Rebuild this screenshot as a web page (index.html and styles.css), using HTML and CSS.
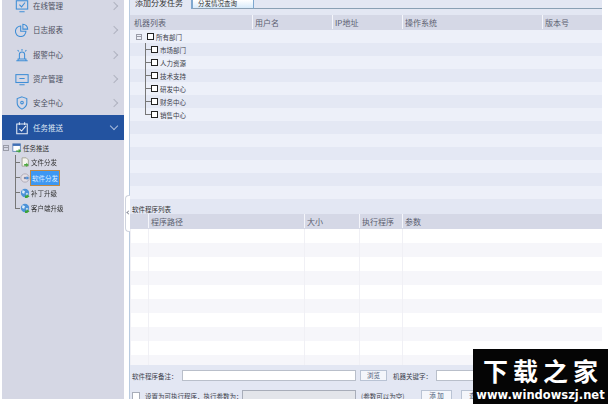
FILE: index.html
```html
<!DOCTYPE html>
<html>
<head>
    <title>任务推送</title>
    <link rel="stylesheet" href="styles.css">
</head>
<body>
    <div class="app">
        <div class="sidebar">
            <div class="menu-item">
                <svg class="menu-icon" viewBox="0 0 16 16"><rect x="1.500" y="2" width="13" height="9.500"/><path d="M5 14.500h6M5 6.500l2.500 2.500 4-5"/></svg>
                <span class="menu-text">在线管理</span><span class="chev"></span>
            </div>
            <div class="menu-item">
                <svg class="menu-icon" viewBox="0 0 16 16"><path d="M6.500 3.500a6 6 0 1 0 6 6h-6zM9 1.500a5.500 5.500 0 0 1 5.500 5.500H9z"/></svg>
                <span class="menu-text">日志报表</span><span class="chev"></span>
            </div>
            <div class="menu-item">
                <svg class="menu-icon" viewBox="0 0 16 16"><path d="M1.500 14.500h13M3.500 14.500v-2h9v2M5 12.500V7.500a3 3 0 0 1 6 0v5M8 1v2M3 2.500l1.500 1.500M13 2.500L11.500 4"/></svg>
                <span class="menu-text">报警中心</span><span class="chev"></span>
            </div>
            <div class="menu-item">
                <svg class="menu-icon" viewBox="0 0 16 16"><rect x="1" y="3" width="14" height="9"/><path d="M5 14.500h6M5 7.500h6"/></svg>
                <span class="menu-text">资产管理</span><span class="chev"></span>
            </div>
            <div class="menu-item">
                <svg class="menu-icon" viewBox="0 0 16 16"><path d="M8 1l5.500 2v5c0 3.500-2.500 5.500-5.500 7-3-1.500-5.500-3.500-5.500-7V3z"/><circle cx="8" cy="7.500" r="1.500"/></svg>
                <span class="menu-text">安全中心</span><span class="chev"></span>
            </div>
            <div class="menu-item active">
                <svg class="menu-icon" viewBox="0 0 16 16"><path d="M2 3.500h12v11H2zM5 1.500v3M11 1.500v3M5 9l2.500 2.500 5-6"/></svg>
                <span class="menu-text">任务推送</span><span class="chev down"></span>
            </div>

            <div class="side-tree">
                <div class="side-root">
                    <span class="expander"></span>
                    <svg class="tree-icon" viewBox="0 0 12 12"><rect x="1" y="1" width="9" height="9" fill="#fff" stroke="#5a7fb5"/><rect x="1" y="1" width="9" height="2.500" fill="#3f6fb5"/><path d="M5 9h3V7l3 2.500L8 12v-1.500H5z" fill="#3ea33a"/></svg>
                    <span>任务推送</span>
                </div>
                <div class="side-node">
                    <svg class="tree-icon" viewBox="0 0 12 12"><path d="M2.500 1h5l2.500 2.500V11h-7.500z" fill="#f5f5ee" stroke="#9a9a8c"/><path d="M5 8.500h2.500V7l3 2.500-3 2.500v-1.500H5z" fill="#4aa83f"/></svg>
                    <span>文件分发</span>
                </div>
                <div class="side-node">
                    <svg class="tree-icon" viewBox="0 0 12 12"><circle cx="6" cy="6" r="5" fill="#e2dfe6" stroke="#a9a5b0"/><circle cx="6" cy="6" r="1.500" fill="#c47f6a"/><path d="M5 5h3V3.500l3 2.500-3 2.500V7H5z" fill="#4d8fd6"/></svg>
                    <span class="selected">软件分发</span>
                </div>
                <div class="side-node">
                    <svg class="tree-icon" viewBox="0 0 12 12"><circle cx="6" cy="6" r="5" fill="#4d93d8"/><path d="M3 2.500l3 1.500-1 3-2.500-1zM7 6l3 .5-1.500 3z" fill="#dfeef8"/><path d="M6 9h2.500V7.500l3 2.500-3 2H6z" fill="#3ea33a"/></svg>
                    <span>补丁升级</span>
                </div>
                <div class="side-node last-node">
                    <svg class="tree-icon" viewBox="0 0 12 12"><circle cx="6" cy="6" r="5" fill="#4d93d8"/><path d="M3 2.500l3 1.500-1 3-2.500-1zM7 6l3 .5-1.500 3z" fill="#dfeef8"/><path d="M6 9h2.500V7.500l3 2.500-3 2H6z" fill="#3ea33a"/></svg>
                    <span>客户端升级</span>
                </div>
            </div>
        </div>

        <div class="splitter"><span class="splitter-arrow"></span></div>

        <div class="panel">
            <div class="tabs">
                <div class="tab on">添加分发任务</div>
                <div class="tab">分发情况查询</div>
            </div>

            <div class="grid-head top-cols">
                <div>机器列表</div>
                <div>用户名</div>
                <div>IP地址</div>
                <div>操作系统</div>
                <div>版本号</div>
            </div>
            <div class="top-rows">
                <div class="row"><span class="expander"></span><span class="check"></span><span>所有部门</span></div>
                <div class="row dept"><span class="check"></span><span>市场部门</span></div>
                <div class="row dept"><span class="check"></span><span>人力资源</span></div>
                <div class="row dept"><span class="check"></span><span>技术支持</span></div>
                <div class="row dept"><span class="check"></span><span>研发中心</span></div>
                <div class="row dept"><span class="check"></span><span>财务中心</span></div>
                <div class="row dept last-dept"><span class="check"></span><span>销售中心</span></div>
                <div class="row"></div>
                <div class="row"></div>
                <div class="row"></div>
                <div class="row"></div>
                <div class="row"></div>
                <div class="row"></div>
            </div>

            <div class="caption">软件程序列表</div>
            <div class="grid-head low-cols">
                <div></div>
                <div>程序路径</div>
                <div>大小</div>
                <div>执行程序</div>
                <div>参数</div>
            </div>
            <div class="low-rows">
                <div class="low-row low-cols"><i></i><i></i><i></i><i></i><i></i></div>
                <div class="low-row low-cols"><i></i><i></i><i></i><i></i><i></i></div>
                <div class="low-row low-cols"><i></i><i></i><i></i><i></i><i></i></div>
                <div class="low-row low-cols"><i></i><i></i><i></i><i></i><i></i></div>
                <div class="low-row low-cols"><i></i><i></i><i></i><i></i><i></i></div>
                <div class="low-row low-cols"><i></i><i></i><i></i><i></i><i></i></div>
                <div class="low-row low-cols"><i></i><i></i><i></i><i></i><i></i></div>
                <div class="low-row low-cols"><i></i><i></i><i></i><i></i><i></i></div>
                <div class="low-row low-cols"><i></i><i></i><i></i><i></i><i></i></div>
                <div class="low-row low-cols"><i></i><i></i><i></i><i></i><i></i></div>
            </div>

            <div class="form-row first-form">
                <span class="lbl note-lbl">软件程序备注：</span>
                <span class="field note-field"></span>
                <span class="btn browse">浏览</span>
                <span class="lbl key-lbl">机器关键字：</span>
                <span class="field key-field"></span>
            </div>
            <div class="form-row second-form">
                <span class="check-light"></span>
                <span class="lbl exec-lbl">设置为可执行程序，执行参数为：</span>
                <span class="field off"></span>
                <span class="lbl empty-lbl">(参数可以为空)</span>
                <span class="btn add">添 加</span>
                <span class="btn add">查 询</span>
            </div>
        </div>
    </div>

    <div class="stamp">
        <div class="stamp-title">下载之家</div>
        <div class="stamp-url">www.windowszj.net</div>
    </div>
</body>
</html>
```

FILE: styles.css
```css
* {
    box-sizing: border-box;
}
html, body {
    margin: 0;
    height: 404px;
    overflow: hidden;
    background: #fff;
}
body {
    font-family: "Noto Sans CJK SC", "Liberation Sans", sans-serif;
    font-size: 6.500px;
    line-height: 10px;
    color: #4a4d5c;
}
/* the source shot is soft, so everything is softened a little */
.app {
    display: flex;
    height: 399px;
    padding-left: 2px;
    overflow: hidden;
    filter: blur(0.35px);
}

/* left menu */
.sidebar {
    width: 122px;
    flex: none;
    background: #d5d7e4;
    overflow: hidden;
}
.menu-item {
    display: flex;
    align-items: center;
    height: 24.300px;
    padding: 0 5px 0 13px;
    font-size: 7.500px;
}
.menu-item:first-child {
    margin-top: -6px;
}
.menu-icon {
    width: 14px;
    height: 14px;
    fill: none;
    stroke: #3f8ed6;
    stroke-width: 1.200;
    flex: none;
}
.menu-text {
    margin-left: 4px;
    flex: 1;
    color: #4c4f60;
}
.chev {
    width: 6px;
    height: 6px;
    margin-right: 2px;
    border-top: 1px solid #b0b3c0;
    border-right: 1px solid #b0b3c0;
    transform: rotate(45deg);
}
.chev.down {
    transform: rotate(135deg);
    border-color: #a9bcdc;
    margin-top: -3px;
}
.active {
    background: #2353a0;
}
.active .menu-text {
    color: #dfe6f3;
}
.active .menu-icon {
    stroke: #e6ecf6;
}

.side-tree {
    padding-top: 1px;
}
.side-root {
    display: flex;
    align-items: center;
    height: 14px;
    padding-left: 1px;
    gap: 1px;
    color: #333;
}
.side-root .tree-icon {
    margin-left: 2px;
}
.side-node {
    position: relative;
    display: flex;
    align-items: center;
    height: 15.300px;
    padding-left: 18px;
    gap: 1px;
    color: #333;
}
.side-node::before {
    content: "";
    position: absolute;
    left: 13px;
    top: 0;
    bottom: 0;
    border-left: 1px solid #777;
}
.side-node::after {
    content: "";
    position: absolute;
    left: 13px;
    top: 7px;
    width: 5px;
    border-top: 1px solid #777;
}
.last-node::before {
    bottom: 8px;
}
.tree-icon {
    width: 10px;
    height: 10px;
    flex: none;
}
.selected {
    background: #3d97f2;
    outline: 1px solid #c08a45;
    color: #dcecff;
    padding: 2px 1px;
    line-height: 10px;
}
.expander {
    width: 6px;
    height: 6px;
    flex: none;
    border: 1px solid #9a9ca8;
    background: linear-gradient(#9a9ca8, #9a9ca8) center / 4px 1px no-repeat;
}

.splitter {
    position: absolute;
    left: 125px;
    top: 195px;
    width: 5px;
    height: 37px;
    background: #fff;
    border: 1px solid #cfd3de;
    border-right: 0;
    border-radius: 4px 0 0 4px;
}
.splitter-arrow {
    position: absolute;
    left: 1px;
    top: 15px;
    width: 3px;
    height: 3px;
    border-left: 1px solid #8c8f9c;
    border-bottom: 1px solid #8c8f9c;
    transform: rotate(45deg);
}

/* right panel */
.panel {
    width: 473px;
    flex: none;
    margin-left: 5px;
    background: #e3e7f3;
    border-left: 1px solid #b9cbe0;
    overflow: hidden;
}
.tabs {
    display: flex;
    height: 9px;
    border-bottom: 1px solid #8aa0b4;
    margin-bottom: 6px;
}
.tab {
    width: 62px;
    height: 9px;
    line-height: 6px;
    padding-left: 5px;
    border-right: 1px solid #7fa8cf;
    border-left: 1px solid #7fa8cf;
    border-bottom: 1px solid #8aa0b4;
    background: linear-gradient(#fff, #d8ebfb);
    color: #333;
    white-space: nowrap;
}
.tab.on {
    background: #e3e7f3;
    border-bottom: 0;
    font-size: 8px;
    border-left: 0;
}
.grid-head {
    display: grid;
    height: 15px;
    background: #d5d8e6;
    line-height: 15px;
    font-size: 8px;
    color: #5c5f70;
}
.grid-head div {
    border-left: 1px solid #f4f5fa;
    padding-left: 2px;
    height: 14px;
}
.grid-head div:first-child {
    border-left: 0;
}
.top-cols {
    grid-template-columns: 122px 80px 70px 140px 60px;
}
.top-cols div:first-child {
    padding-left: 4px;
}
.low-cols {
    grid-template-columns: 18px 156px 55px 43px 1fr;
}
.top-rows {
    height: 169px;
}
.row {
    position: relative;
    display: flex;
    align-items: center;
    gap: 2px;
    height: 13px;
    padding-left: 6px;
    background: #edf0f9;
    color: #3b3d4a;
}
.row:nth-child(even) {
    background: #e4e8f4;
}
.row.dept {
    padding-left: 21px;
}
.dept::before {
    content: "";
    position: absolute;
    left: 15px;
    top: 0;
    bottom: 0;
    border-left: 1px solid #777;
}
.dept::after {
    content: "";
    position: absolute;
    left: 15px;
    top: 6px;
    width: 6px;
    border-top: 1px solid #777;
}
.last-dept::before {
    bottom: 6px;
}
.row .expander {
    margin-right: 3px;
}
.check {
    width: 7px;
    height: 7px;
    flex: none;
    border: 1px solid #222;
    background: #fff;
}
.caption {
    height: 15px;
    padding: 5px 0 0 2px;
    color: #333;
}
.low-rows {
    height: 136px;
    overflow: hidden;
}
.low-row {
    display: grid;
    height: 14px;
    background: #fff;
}
.low-row:nth-child(even) {
    background: #f6f6fa;
}
.low-row i {
    border-left: 1px solid #f0f0f5;
}
.form-row {
    position: relative;
    display: flex;
    align-items: center;
    padding-left: 2px;
    white-space: nowrap;
}
.first-form {
    height: 11px;
    margin-top: 5px;
}
.second-form {
    height: 11px;
    margin-top: 9px;
}
.lbl {
    flex: none;
    color: #3d3f4c;
}
.note-lbl {
    width: 50px;
}
.field {
    height: 11px;
    flex: none;
    background: #fff;
    border: 1px solid #b9bfca;
}
.note-field {
    width: 174px;
}
.btn {
    flex: none;
    height: 11px;
    border: 1px solid #b9c3d4;
    background: #f4f6fb;
    text-align: center;
    line-height: 9px;
    color: #4a5a78;
}
.browse {
    width: 27px;
    margin-left: 4px;
}
.key-lbl {
    margin-left: 6px;
    width: 43px;
}
.key-field {
    width: 100px;
}
.check-light {
    width: 8px;
    height: 8px;
    flex: none;
    background: #fff;
    border: 1px solid #a8adb9;
}
.exec-lbl {
    margin-left: 5px;
    width: 97px;
}
.off {
    width: 114px;
    background: #e3e5ea;
    border-color: #a8adb9;
}
.empty-lbl {
    margin-left: 5px;
    width: 60px;
}
.add {
    width: 31px;
    margin-right: 9px;
}

/* site stamp in the corner */
.stamp {
    position: absolute;
    left: 473px;
    top: 349px;
    width: 135px;
    height: 55px;
    background: #050505;
    color: #fff;
    text-align: center;
}
.stamp-title {
    font-family: "Noto Sans CJK SC", sans-serif;
    font-weight: 700;
    font-size: 25px;
    line-height: 26px;
    letter-spacing: 5px;
    padding: 8px 0 0 5px;
}
.stamp-url {
    font-family: "DejaVu Sans", sans-serif;
    font-weight: 700;
    font-size: 11.500px;
    line-height: 14px;
    margin-top: 5px;
    white-space: nowrap;
}
```
